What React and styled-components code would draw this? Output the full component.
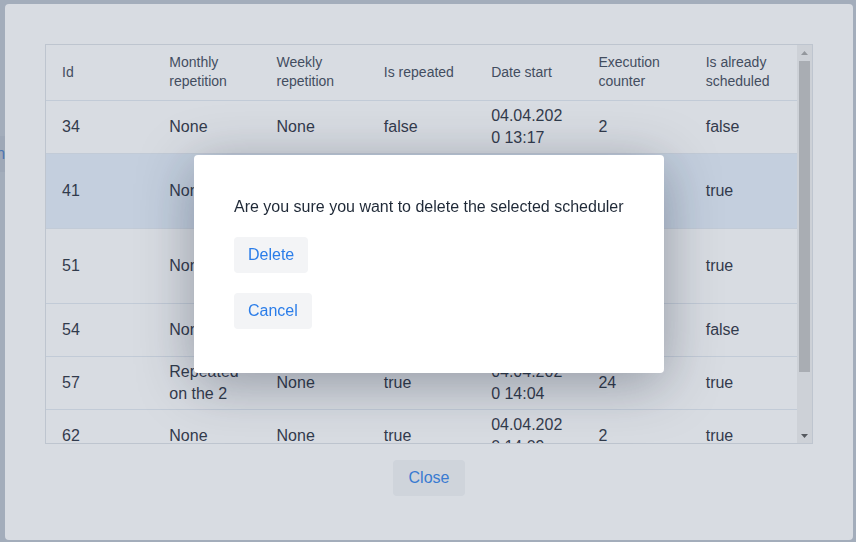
import React from 'react';
import styled, { createGlobalStyle } from 'styled-components';

const GlobalStyle = createGlobalStyle`
    html, body {
        margin: 0;
        height: 100%;
    }
    body {
        background: #ffffff;
        color: #1f2937;
        font-family: "Liberation Sans", Arial, sans-serif;
    }
`;

const Page = styled.div`
    height: 542px;
    padding-top: 136px;
    box-sizing: border-box;
`;

const Button = styled.button`
    height: 36px;
    padding: 0 14px;
    border: none;
    border-radius: 4px;
    background: #f3f4f6;
    color: #2b7de9;
    font-family: inherit;
    font-size: 16px;
    cursor: pointer;
`;

const PageButton = styled(Button)`
    margin-left: -48px;
`;

const Backdrop = styled.div`
    position: fixed;
    inset: 0;
    display: flex;
    align-items: center;
    justify-content: center;
    padding: 2px 0 0 2px;
    background: rgba(100, 116, 139, 0.45);
`;

const Dialog = styled.div`
    width: 848px;
    height: 536px;
    padding: 40px;
    box-sizing: border-box;
    display: flex;
    flex-direction: column;
    align-items: center;
    background: #ffffff;
    border-radius: 4px;
`;

const TableWrap = styled.div`
    width: 100%;
    height: 400px;
    flex-shrink: 0;
    box-sizing: border-box;
    display: flex;
    border: 1px solid #dde1e6;
`;

const ScrollArea = styled.div`
    flex: 1;
    overflow: hidden;
`;

const ScrollBar = styled.div`
    width: 15px;
    display: flex;
    flex-direction: column;
    background: #f1f1f1;
`;

const ScrollArrow = styled.div`
    height: 15px;
    display: flex;
    align-items: center;
    justify-content: center;
`;

const ScrollTrack = styled.div`
    flex: 1;
    padding: 1px 2px 0;
`;

const ScrollThumb = styled.div`
    height: ${(p) => p.$size}px;
    background: #c1c1c1;
`;

const Table = styled.table`
    width: 100%;
    table-layout: fixed;
    border-collapse: collapse;
`;

const Th = styled.th`
    padding: 8px 16px 9px;
    text-align: left;
    font-weight: normal;
    font-size: 14px;
    line-height: 19px;
    color: #374151;
    border-bottom: 1px solid #e2e8f0;
`;

const Row = styled.tr`
    background: ${(p) => (p.$selected ? '#e4eefa' : 'transparent')};
`;

const Td = styled.td`
    padding: 4px 16px;
    font-size: 16px;
    line-height: 22px;
    vertical-align: middle;
    overflow-wrap: anywhere;
    border-bottom: 1px solid #e2e8f0;
`;

const CloseButton = styled(Button)`
    margin-top: 16px;
    padding: 0 16px;
`;

const ConfirmLayer = styled.div`
    position: fixed;
    inset: 0;
    display: flex;
    justify-content: center;
    align-items: flex-start;
    padding: 155px 0 0 2px;
    background: rgba(100, 116, 139, 0.25);
`;

const Modal = styled.div`
    width: 470px;
    box-sizing: border-box;
    padding: 42px 40px 44px;
    display: flex;
    flex-direction: column;
    align-items: flex-start;
    gap: 20px;
    background: #ffffff;
    border-radius: 4px;
    box-shadow: 0 10px 55px rgba(15, 23, 42, 0.35);
`;

const Message = styled.p`
    margin: 0;
    font-size: 16px;
    line-height: 20px;
    color: #1f2937;
`;

const columns = [
    'Id',
    'Monthly repetition',
    'Weekly repetition',
    'Is repeated',
    'Date start',
    'Execution counter',
    'Is already scheduled',
];

const schedulers = [
    { id: 34, monthly: 'None', weekly: 'None', repeated: 'false', start: '04.04.2020 13:17', counter: 2, scheduled: 'false' },
    { id: 41, monthly: 'None', weekly: 'Repeated on Tuesday', repeated: 'true', start: '04.04.2020 13:25', counter: 5, scheduled: 'true' },
    { id: 51, monthly: 'None', weekly: 'Repeated on Thursday', repeated: 'true', start: '04.04.2020 13:40', counter: 3, scheduled: 'true' },
    { id: 54, monthly: 'None', weekly: 'None', repeated: 'false', start: '04.04.2020 13:52', counter: 1, scheduled: 'false' },
    { id: 57, monthly: 'Repeated on the 2', weekly: 'None', repeated: 'true', start: '04.04.2020 14:04', counter: 24, scheduled: 'true' },
    { id: 62, monthly: 'None', weekly: 'None', repeated: 'true', start: '04.04.2020 14:09', counter: 2, scheduled: 'true' },
    { id: 67, monthly: 'None', weekly: 'None', repeated: 'false', start: '04.04.2020 14:15', counter: 0, scheduled: 'false' },
];

const App = () => {
    const selected = 41;

    return (
        <>
            <GlobalStyle />
            <Page>
                <PageButton>Open</PageButton>
            </Page>
            <Backdrop>
                <Dialog>
                    <TableWrap>
                        <ScrollArea>
                            <Table>
                                <thead>
                                    <tr>
                                        {columns.map((c) => (
                                            <Th key={c}>{c}</Th>
                                        ))}
                                    </tr>
                                </thead>
                                <tbody>{renderRows(schedulers, selected)}</tbody>
                            </Table>
                        </ScrollArea>
                        <ScrollBar>
                            <ScrollArrow>
                                <svg width="7" height="4" viewBox="0 0 7 4">
                                    <polygon points="0,4 7,4 3.5,0" fill="#a3a3a3" />
                                </svg>
                            </ScrollArrow>
                            <ScrollTrack>
                                <ScrollThumb $size={311} />
                            </ScrollTrack>
                            <ScrollArrow>
                                <svg width="7" height="4" viewBox="0 0 7 4">
                                    <polygon points="0,0 7,0 3.5,4" fill="#505050" />
                                </svg>
                            </ScrollArrow>
                        </ScrollBar>
                    </TableWrap>
                    <CloseButton>Close</CloseButton>
                </Dialog>
            </Backdrop>
            <ConfirmLayer>
                <Modal>
                    <Message>Are you sure you want to delete the selected scheduler</Message>
                    <Button>Delete</Button>
                    <Button>Cancel</Button>
                </Modal>
            </ConfirmLayer>
        </>
    );
};

function renderRows(rows, selected) {
    return rows.map((r) => (
        <Row key={r.id} $selected={r.id === selected}>
            <Td>{r.id}</Td>
            <Td>{r.monthly}</Td>
            <Td>{r.weekly}</Td>
            <Td>{r.repeated}</Td>
            <Td>{r.start}</Td>
            <Td>{r.counter}</Td>
            <Td>{r.scheduled}</Td>
        </Row>
    ));
}

export default App;
